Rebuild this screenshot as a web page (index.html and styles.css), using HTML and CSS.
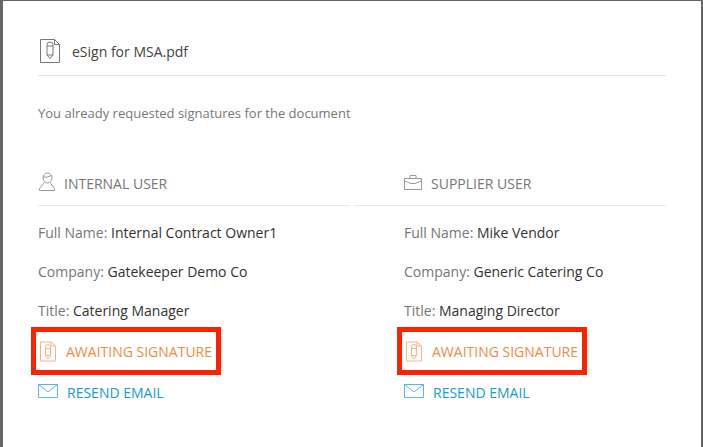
FILE: index.html
```html
<!DOCTYPE html>
<html lang="en">
<head>
<meta charset="utf-8">
<title>eSign for MSA.pdf</title>
<link rel="stylesheet" href="styles.css">
</head>
<body>
<div class="modal">
  <header class="head">
    <svg class="doc-icon" width="22" height="26" viewBox="0 0 22 26" fill="none" stroke="#777" stroke-width="1">
      <path d="M1.5 1.5H15.500L20.500 6.500V24.500H1.500Z"/>
      <path d="M15.500 1.500V6.500H20.500"/>
      <path d="M8 6.500Q8 4 11 4Q14 4 14 6.500V17L11 20.500L8 17Z"/>
      <path d="M8 8H14M8 17H14"/>
    </svg>
    <span class="title">eSign for MSA.pdf</span>
  </header>
  <p class="intro">You already requested signatures for the document</p>
  <div class="cols">
    <section class="col">
      <div class="col-head">
        <svg class="user-icon" width="16" height="20" viewBox="0 0 16 20" fill="none" stroke="#999" stroke-width="1">
          <ellipse cx="8.500" cy="6" rx="4.500" ry="5"/>
          <path d="M5.500 10.500L.5 16.500V18.500H15.500V16.500L11 10.500"/>
          <path d="M4 5Q8 6 12.500 3.500"/>
        </svg>
        <span>INTERNAL USER</span>
      </div>
      <div class="info">
        <div class="row"><span class="lbl">Full Name:</span> Internal Contract Owner1</div>
        <div class="row"><span class="lbl">Company:</span> Gatekeeper Demo Co</div>
        <div class="row"><span class="lbl">Title:</span> Catering Manager</div>
        <div class="row status await">
          <svg class="sig-icon" width="17" height="21" viewBox="0 0 17 21" fill="none" stroke="#f9b488" stroke-width="1">
            <path d="M1.500 1H12L16.500 5V20H1.500Z"/>
            <path d="M12 1V5H16.500"/>
            <path d="M6.500 6Q6.500 3.500 9 3.500Q11.500 3.500 11.500 6V14.500L9 18L6.500 14.500Z"/>
            <path d="M6.500 7.500H11.500M6.500 14.500H11.500"/>
          </svg>
          <span>AWAITING SIGNATURE</span>
          <i class="mark"></i>
        </div>
        <div class="row status resend">
          <svg class="mail-icon" width="20" height="14" viewBox="0 0 20 14" fill="none" stroke="#5cb8de" stroke-width="1">
            <path d="M.5 .5H19.500V13.500H.5Z"/>
            <path d="M.5 .5L10 8L19.500 .5"/>
          </svg>
          <span>RESEND EMAIL</span>
        </div>
      </div>
    </section>
    <section class="col">
      <div class="col-head">
        <svg class="case-icon" width="18" height="15" viewBox="0 0 18 15" fill="none" stroke="#999" stroke-width="1">
          <path d="M.5 3.500H17.500V14.500H.5Z"/>
          <path d="M.5 6L7 8.500H11L17.500 6"/>
          <path d="M6 3.500V.5H12V3.500"/>
        </svg>
        <span>SUPPLIER USER</span>
      </div>
      <div class="info">
        <div class="row"><span class="lbl">Full Name:</span> Mike Vendor</div>
        <div class="row"><span class="lbl">Company:</span> Generic Catering Co</div>
        <div class="row"><span class="lbl">Title:</span> Managing Director</div>
        <div class="row status await">
          <svg class="sig-icon" width="17" height="21" viewBox="0 0 17 21" fill="none" stroke="#f9b488" stroke-width="1">
            <path d="M1.500 1H12L16.500 5V20H1.500Z"/>
            <path d="M12 1V5H16.500"/>
            <path d="M6.500 6Q6.500 3.500 9 3.500Q11.500 3.500 11.500 6V14.500L9 18L6.500 14.500Z"/>
            <path d="M6.500 7.500H11.500M6.500 14.500H11.500"/>
          </svg>
          <span>AWAITING SIGNATURE</span>
          <i class="mark"></i>
        </div>
        <div class="row status resend">
          <svg class="mail-icon" width="20" height="14" viewBox="0 0 20 14" fill="none" stroke="#5cb8de" stroke-width="1">
            <path d="M.5 .5H19.500V13.500H.5Z"/>
            <path d="M.5 .5L10 8L19.500 .5"/>
          </svg>
          <span>RESEND EMAIL</span>
        </div>
      </div>
    </section>
  </div>
</div>
</body>
</html>
```
FILE: styles.css
```css
html, body { margin: 0; height: 100%; }
body {
  background: #666;
  overflow: hidden;
  font-family: "Open Sans", sans-serif;
  font-size: 14px;
  color: #333;
  padding: 1px 2px 0 3px;
  box-sizing: border-box;
}
.modal {
  background: #fff;
  height: 100%;
  padding: 37px 35px 0;
  box-sizing: border-box;
}
.head {
  display: flex;
  align-items: center;
  gap: 11px;
  height: 27px;
  padding: 0 0 10px 1px;
  border-bottom: 1px solid #e4e4e4;
}
.doc-icon { margin-top: -1px; }
.title { color: #444; font-size: 14px; }
.intro { margin: 28px 0 0; color: #777; font-size: 13px; line-height: 18px; }
.cols { display: flex; gap: 4px; margin-top: 43px; }
.col { flex: 1; min-width: 0; }
.col + .col .col-head, .col + .col .info { padding-left: 50px; }
.col-head {
  display: flex;
  align-items: center;
  height: 36px;
  padding-bottom: 4px;
  border-bottom: 1px solid #e8e8e8;
  color: #777;
  font-size: 14px;
}
.user-icon { margin: -2px 9px 0 1px; }
.case-icon { margin: -2px 9px 0 0; }
.info { padding-top: 8px; }
.row { height: 39px; line-height: 38px; color: #333; }
.lbl { color: #777; }
.status { position: relative; display: flex; align-items: center; }
.await { color: #f58a42; height: 41px; }
.resend { color: #1a9bd1; height: 41px; }
.sig-icon { margin: 0 10px 0 1px; }
.mail-icon { margin: -3px 9px 0 0; }
.mark {
  position: absolute;
  left: -7px;
  top: -4px;
  width: 190px;
  height: 48px;
  border: 5px solid #ff2200;
  box-sizing: border-box;
}
```
